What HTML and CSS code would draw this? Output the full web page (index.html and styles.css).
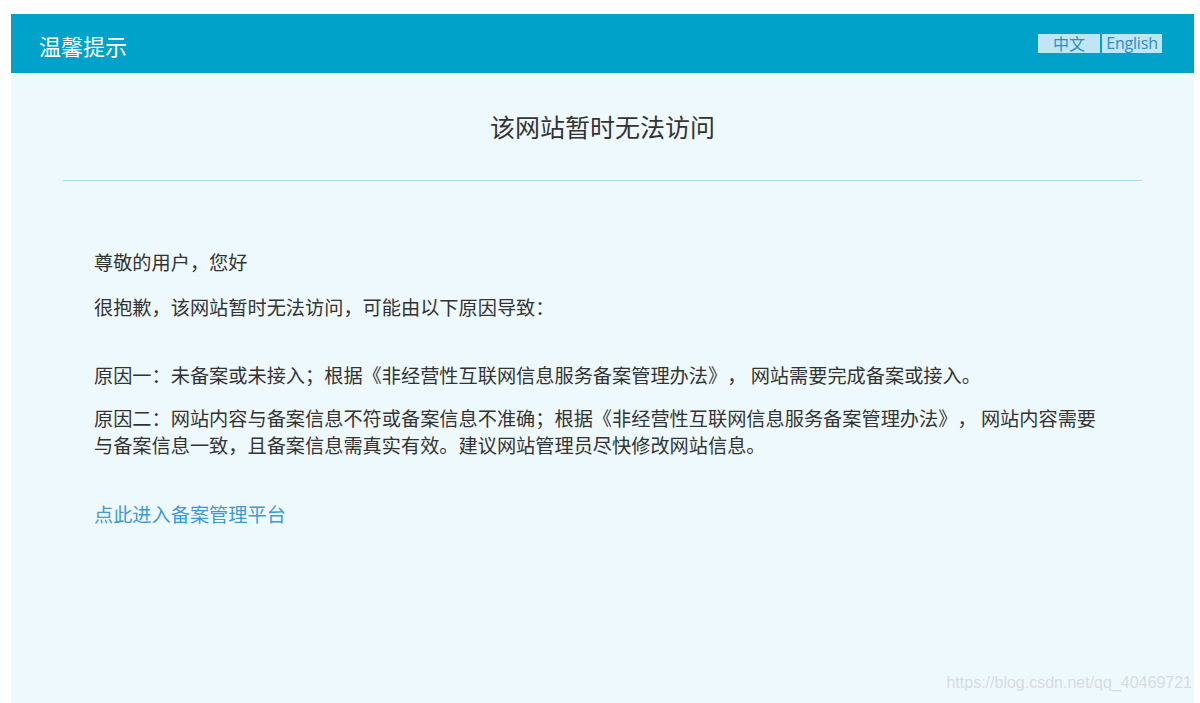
FILE: index.html
```html
<!DOCTYPE html>
<html lang="zh-CN">
<head>
<meta charset="utf-8">
<title>温馨提示</title>
<link rel="stylesheet" href="styles.css">
</head>
<body>
<div class="page">
  <header class="topbar">
    <div class="brand">温馨提示</div>
    <nav class="lang">
      <a class="lang-btn lang-zh" href="#">中文</a>
      <a class="lang-btn lang-en" href="#">English</a>
    </nav>
  </header>
  <main class="main">
    <h1 class="title">该网站暂时无法访问</h1>
    <div class="rule"></div>
    <div class="notice">
      <p class="greet">尊敬的用户，您好</p>
      <p class="sorry">很抱歉，该网站暂时无法访问，可能由以下原因导致：</p>
      <p class="reason r1">原因一：未备案或未接入；根据《非经营性互联网信息服务备案管理办法》， 网站需要完成备案或接入。</p>
      <p class="reason r2">原因二：网站内容与备案信息不符或备案信息不准确；根据《非经营性互联网信息服务备案管理办法》， 网站内容需要与备案信息一致，且备案信息需真实有效。建议网站管理员尽快修改网站信息。</p>
      <a class="entry" href="#">点此进入备案管理平台</a>
    </div>
  </main>
  <div class="watermark">https://blog.csdn.net/qq_40469721</div>
</div>
</body>
</html>
```

FILE: styles.css
```css
html, body {
  margin: 0;
  padding: 0;
  background: #ffffff;
}

body {
  font-family: "Noto Sans CJK SC", "Noto Sans", sans-serif;
  color: #333333;
  overflow: hidden;
  text-spacing-trim: space-all;
}

.page {
  position: relative;
  margin: 14px 6px 0 11px;
  min-height: 689px;
  background: #eef9fe;
}

.topbar {
  height: 59px;
  background: #00a2ca;
  display: flex;
  align-items: center;
  justify-content: space-between;
  padding: 0 32px 0 28px;
}

.brand {
  color: #ffffff;
  font-size: 22px;
  line-height: 30px;
  margin-top: 2px;
}

.lang {
  display: flex;
  gap: 2px;
  margin-top: -1px;
}

.lang-btn {
  display: block;
  height: 19px;
  line-height: 19px;
  background: #bee6f3;
  color: #2f8dc6;
  text-decoration: none;
  text-align: center;
  font-size: 16px;
  font-family: "Open Sans", "Noto Sans CJK SC", sans-serif;
}

.lang-zh {
  width: 62px;
  font-family: "Noto Sans CJK SC", sans-serif;
}

.lang-en {
  width: 60px;
  letter-spacing: -0.2px;
}

.main {
  padding: 0 52px 120px;
}

.title {
  margin: 36px 0 0;
  font-weight: normal;
  font-size: 25px;
  line-height: 34px;
  text-align: center;
  color: #333333;
}

.rule {
  height: 1px;
  background: #a3dcef;
  margin-top: 37px;
}

.notice {
  padding: 68px 31px 0;
  font-size: 19.2px;
  line-height: 27px;
}

.notice p {
  margin: 0;
}

.greet {
  margin-bottom: 18px !important;
}

.sorry {
  margin-bottom: 41px !important;
}

.r1 {
  margin-bottom: 16px !important;
}

.r2 {
  margin-bottom: 42px !important;
}

.entry {
  display: inline-block;
  color: #3d9ad6;
  text-decoration: none;
}

.watermark {
  position: absolute;
  right: 2px;
  top: 659px;
  font-family: "Liberation Sans", Arial, sans-serif;
  font-size: 16px;
  line-height: 20px;
  color: #d7dcdf;
}
```
